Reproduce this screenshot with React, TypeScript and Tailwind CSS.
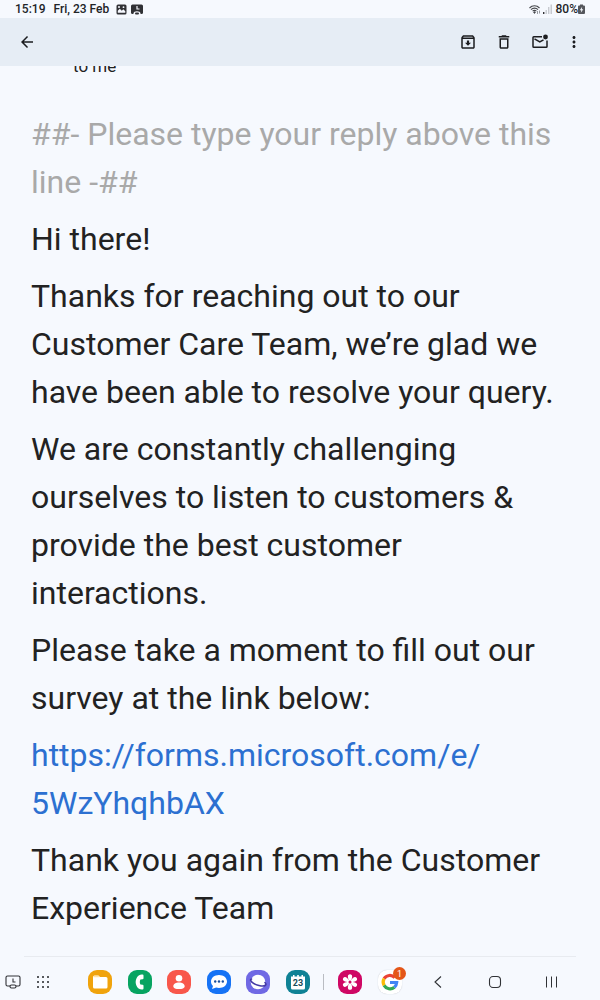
import type { ReactNode } from "react";
import {
  MdArrowBack,
  MdDeleteOutline,
  MdMoreVert,
  MdOutlineArchive,
} from "react-icons/md";

const StatusBar = () => (
  <div className="flex h-[18px] items-center justify-between pl-[15px] pr-[15px] text-[12px] leading-4 font-medium text-[#222428]">
    <div className="flex items-center">
      <span>15:19</span>
      <span className="ml-2">Fri, 23 Feb</span>
      <svg className="ml-[7px] h-[11px] w-[11px]" viewBox="0 0 11 11">
        <rect x="0.5" y="0.5" width="10" height="10" rx="1.5" fill="#303135" />
        <path d="M1.800 8.800v-2l2-2 2 2 1.500-1.500 2 2v1.500z" fill="#f7f9ff" />
        <circle cx="3" cy="3" r="1" fill="#f7f9ff" />
        <circle cx="7.500" cy="3.200" r="0.900" fill="#f7f9ff" />
      </svg>
      <svg className="ml-1 h-[11px] w-3" viewBox="0 0 12 11">
        <rect y="0.500" width="12" height="9.500" rx="1.500" fill="#303135" />
        <path d="M6 2v3h2.500" fill="none" stroke="#f7f9ff" strokeWidth="1.200" />
        <path d="M2.500 10.500v-1c0-3 7-3 7 0v1z" fill="#f7f9ff" />
        <rect x="4" y="8.500" width="4" height="2" rx="1" fill="#303135" />
      </svg>
    </div>
    <div className="flex items-center">
      <svg className="h-[11px] w-3" viewBox="0 0 12 11" fill="none" stroke="#45474b">
        <path d="M0.500 4c2.800-3 7.200-3 10 0M2 5.600c2-2 5-2 7 0M3.600 7.200c1.200-1 2.600-1 3.800 0" strokeWidth="1.100" />
        <circle cx="5.500" cy="8.500" r="0.700" fill="#45474b" />
        <path d="M8.500 7v3M10.500 6.500v3" stroke="#8d9096" strokeWidth="0.900" />
      </svg>
      <svg className="ml-[2px] h-[10px] w-[9px]" viewBox="0 0 9 10">
        <path d="M0 8h1.400v2H0z" fill="#303135" />
        <path d="M2.500 6h1.400v4H2.500zM5 3h1.400v7H5zM7.500 0.500H9V10H7.500z" fill="#c7cad0" />
      </svg>
      <span className="ml-1">80%</span>
      <svg className="h-[10px] w-[7px]" viewBox="0 0 7 10">
        <path d="M2 0.500h3v1h1a1 1 0 0 1 1 1V9a1 1 0 0 1-1 1H1a1 1 0 0 1-1-1V2.500a1 1 0 0 1 1-1h1z" fill="#55575c" />
        <path d="M4.200 2.800 1.800 6.200h1.500L2.800 8.800 5.300 5.300H3.800z" fill="#f7f9ff" />
      </svg>
    </div>
  </div>
);

const ToolButton = ({ label, width = "w-9", children }: { label: string; width?: string; children: ReactNode }) => (
  <button
    aria-label={label}
    className={`flex h-9 cursor-pointer items-center justify-center text-lg text-[#1b1c1f] ${width}`}
  >
    {children}
  </button>
);

const Toolbar = () => (
  <header className="flex h-12 items-center justify-between bg-[#e6edf5] pl-[9px] pr-[10px]">
    <ToolButton label="Back">
      <MdArrowBack />
    </ToolButton>
    <div className="flex">
      <ToolButton label="Archive">
        <MdOutlineArchive />
      </ToolButton>
      <ToolButton label="Delete">
        <MdDeleteOutline />
      </ToolButton>
      <ToolButton label="Mark as unread">
        <svg className="h-[18px] w-[18px]" viewBox="0 0 18 18" fill="none" stroke="currentColor" strokeWidth="1.500">
          <path d="M11 3.800H2.800a.8.8 0 0 0-.8.8v8.800a.8.8 0 0 0 .8.8h12.400a.8.8 0 0 0 .8-.8V7.500" />
          <path d="M3.500 5.800 8.800 9l3.700-2.200" />
          <circle cx="14.500" cy="4" r="2.400" fill="currentColor" stroke="none" />
        </svg>
      </ToolButton>
      <ToolButton label="More options" width="w-8">
        <MdMoreVert />
      </ToolButton>
    </div>
  </header>
);

const Message = () => (
  <main className="flex-1 overflow-hidden">
    <div className="-mt-[10px] ml-[73px] text-[17px] leading-5 text-[#222222]">to me</div>
    <article className="mt-[34px] flex flex-col gap-[9px] px-[31px] text-[32px] leading-[48px] text-[#222222]">
      <p className="text-[#a9a9a9]">##- Please type your reply above this line -##</p>
      <p>Hi there!</p>
      <p>
        Thanks for reaching out to our Customer Care Team, we’re glad we have
        been able to resolve your query.
      </p>
      <p>
        We are constantly challenging ourselves to listen to customers &amp;
        provide the best customer interactions.
      </p>
      <p>Please take a moment to fill out our survey at the link below:</p>
      <p>
        <a href="https://forms.microsoft.com/e/5WzYhqhbAX" className="text-[#2c70d1]">
          https://forms.microsoft.com/e/
          <wbr />
          5WzYhqhbAX
        </a>
      </p>
      <p>Thank you again from the Customer Experience Team</p>
    </article>
  </main>
);

const DockButton = ({ label, color, children }: { label: string; color: string; children: ReactNode }) => (
  <button aria-label={label} className={`relative h-6 w-6 shrink-0 cursor-pointer rounded-[9px] ${color}`}>
    {children}
  </button>
);

const Dock = () => (
  <nav className="flex h-[36px] items-center pr-[42px] pl-[5px]">
    <button aria-label="Recent activity" className="cursor-pointer">
      <svg className="h-4 w-4" viewBox="0 0 16 16" fill="none" stroke="#303236" strokeWidth="1.100">
        <path d="M5 12H2.500A1.500 1.500 0 0 1 1 10.500v-7A1.500 1.500 0 0 1 2.500 2h11A1.500 1.500 0 0 1 15 3.500v7a1.500 1.500 0 0 1-1.500 1.500H11" />
        <path d="M8 4.500v3.500h2.500" />
        <rect x="5" y="11" width="6" height="3" rx="1.500" />
      </svg>
    </button>
    <button aria-label="All apps" className="ml-[15px] cursor-pointer">
      <svg className="h-[14px] w-[14px]" viewBox="0 0 14 14" fill="#222428">
        {[2, 7, 12].map((y) =>
          [2, 7, 12].map((x) => <circle key={`${x}-${y}`} cx={x} cy={y} r="1" />)
        )}
      </svg>
    </button>

    <div className="ml-[38px] flex w-[222px] justify-between">
      <DockButton label="My files" color="bg-[#f0a30c]">
        <svg viewBox="0 0 24 24">
          <path d="M5 7a1.500 1.500 0 0 1 1.500-1.500h4L12 7h6a1.500 1.500 0 0 1 1.500 1.500V17a1.500 1.500 0 0 1-1.500 1.500H6.500A1.500 1.500 0 0 1 5 17z" fill="#fff" />
          <path d="M5.500 6h5l1.200 1.200H5.500z" fill="#ffe3a3" />
        </svg>
      </DockButton>
      <DockButton label="Phone" color="bg-[#07a461]">
        <svg viewBox="0 0 24 24">
          <path d="M13.800 4.500h.7a1 1 0 0 1 1 1v2.700a1 1 0 0 1-.9 1l-2.200.3c-.8 1.500-.8 3.500 0 5l2.200.3a1 1 0 0 1 .9 1v2.700a1 1 0 0 1-1 1h-.7C5.700 18.700 5.700 5.300 13.800 4.500z" fill="#fff" />
        </svg>
      </DockButton>
      <DockButton label="Contacts" color="bg-[#f8574b]">
        <svg viewBox="0 0 24 24" fill="#fff">
          <circle cx="12" cy="8.300" r="3.300" />
          <path d="M6.300 16.200c0-2.500 2.600-3.800 5.700-3.800s5.700 1.300 5.700 3.800c0 2-2.600 2.800-5.700 2.800s-5.700-.8-5.700-2.800z" />
        </svg>
      </DockButton>
      <DockButton label="Messages" color="bg-[#1673f5]">
        <svg viewBox="0 0 24 24">
          <path d="M12 5c4.500 0 8 2.800 8 6.500S16.500 18 12 18c-1 0-2-.1-2.900-.4L5 19l1-3c-1.300-1.200-2-2.800-2-4.500C4 7.800 7.500 5 12 5z" fill="#fff" />
          <g fill="#174f9f">
            <circle cx="8.200" cy="11.500" r="1.200" />
            <circle cx="12" cy="11.500" r="1.200" />
            <circle cx="15.800" cy="11.500" r="1.200" />
          </g>
        </svg>
      </DockButton>
      <DockButton label="Internet" color="bg-[#7069e4]">
        <svg viewBox="0 0 24 24">
          <circle cx="12" cy="12" r="7.300" fill="#fff" />
          <path d="M5.500 9C2.500 10 7 14 13 15.500s8.500-.5 6-3" fill="none" stroke="#453aa5" strokeWidth="1.600" strokeLinecap="round" />
        </svg>
      </DockButton>
      <DockButton label="Calendar" color="bg-[#0f8295]">
        <svg viewBox="0 0 24 24">
          <path d="M5 6.500h2V5h1.500v1.500h2.700V5h1.600v1.500h2.700V5H17v1.500h2V18a1.500 1.500 0 0 1-1.500 1.500h-11A1.500 1.500 0 0 1 5 18z" fill="#fff" />
          <text x="12" y="16" textAnchor="middle" fontSize="9" fontWeight="700" fill="#174c59">
            23
          </text>
        </svg>
      </DockButton>
    </div>

    <div className="ml-[13px] h-4 w-px bg-[#b9bcc2]" />

    <div className="ml-[14px] flex gap-4">
      <DockButton label="Gallery" color="bg-[#cf0764]">
        <svg viewBox="0 0 24 24" fill="#fff">
          {[0, 60, 120, 180, 240, 300].map((angle) => (
            <path
              key={angle}
              transform={`rotate(${angle} 12 12)`}
              d="M11.300 11C9.500 8 9 4.200 12 4.200S14.500 8 12.700 11z"
            />
          ))}
          <circle cx="12" cy="12" r="1.500" fill="#cf0764" />
        </svg>
      </DockButton>
      <DockButton label="Google, 1 notification" color="bg-white shadow-[0_0_1px_#b8bcc4]">
        <svg viewBox="0 0 24 24" fill="none" strokeWidth="3.200">
          <path d="M16.800 7.600A6.800 6.800 0 0 0 6.100 8.600" stroke="#ea4335" />
          <path d="M6.100 8.600a6.800 6.800 0 0 0 0 6.800" stroke="#fbbc05" />
          <path d="M6.100 15.400a6.800 6.800 0 0 0 10.300 1.800" stroke="#34a853" />
          <path d="M16.400 17.200a6.800 6.800 0 0 0 2.300-4.700H12" stroke="#4285f4" />
        </svg>
        <span className="absolute -top-[3px] -right-[4px] flex h-[13px] w-[13px] items-center justify-center rounded-full bg-[#e45618] text-[9px] leading-3 text-white">
          1
        </span>
      </DockButton>
    </div>

    <div className="flex flex-1 items-center justify-between pl-[29px]">
      <button aria-label="Go back" className="cursor-pointer">
        <svg className="h-[14px] w-[14px]" viewBox="0 0 14 14" fill="none" stroke="#303236" strokeWidth="1.100">
          <path d="m10 1.500-6 5.500 6 5.500" />
        </svg>
      </button>
      <button aria-label="Home" className="cursor-pointer">
        <svg className="h-[14px] w-[14px]" viewBox="0 0 14 14" fill="none" stroke="#303236" strokeWidth="1.100">
          <rect x="1.500" y="1.500" width="11" height="11" rx="3.500" />
        </svg>
      </button>
      <button aria-label="Recent apps" className="cursor-pointer">
        <svg className="h-[14px] w-[14px]" viewBox="0 0 14 14" fill="none" stroke="#303236" strokeWidth="1">
          <path d="M2.500 1.500v11M7.500 1.500v11M12.500 1.500v11" />
        </svg>
      </button>
    </div>
  </nav>
);

const App = () => {
  return (
    <div className="flex min-h-screen flex-col bg-[#f6f9fe] font-[Roboto,sans-serif]">
      <StatusBar />
      <Toolbar />
      <Message />
      <footer>
        <div className="mx-6 mb-[7px] h-px bg-[#e8ebf0]" />
        <Dock />
      </footer>
    </div>
  );
};

export default App;
